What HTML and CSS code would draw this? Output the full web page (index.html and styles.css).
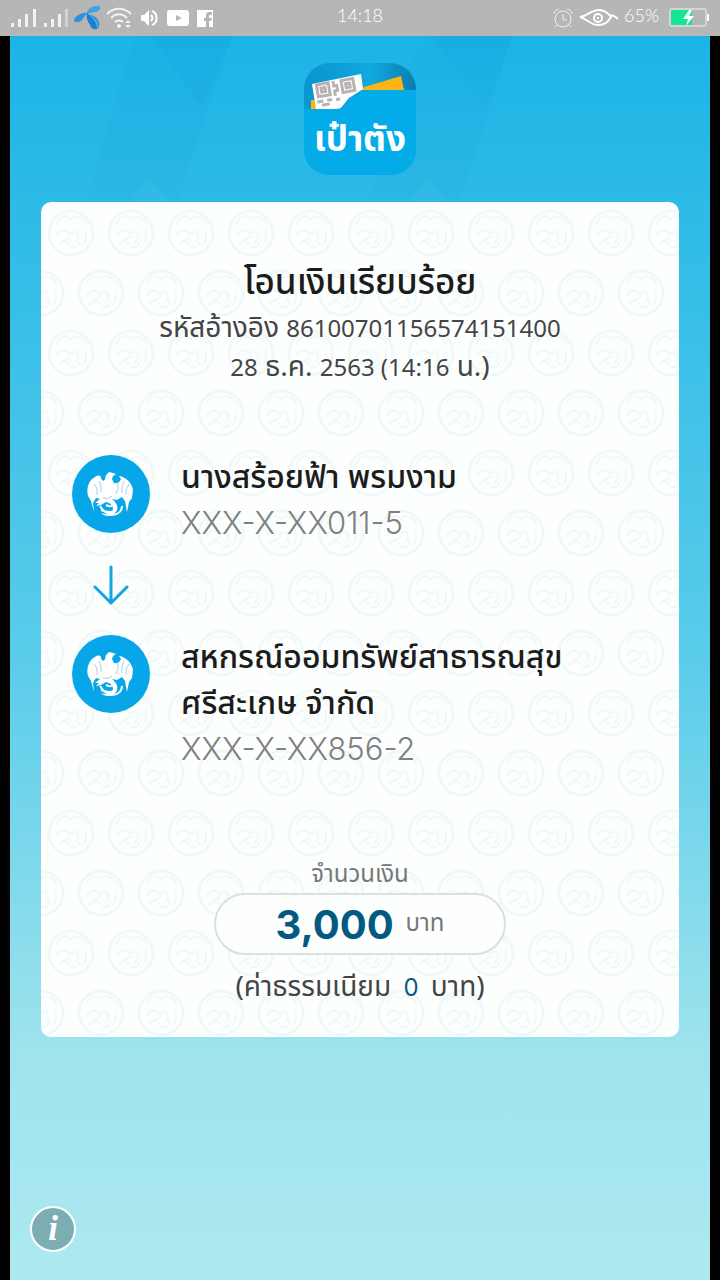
FILE: index.html
```html
<!DOCTYPE html>
<html lang="th">
<head>
    <meta charset="UTF-8">
    <meta name="viewport" content="width=device-width, initial-scale=1.0">
    <title>โอนเงินเรียบร้อย</title>
    <link rel="stylesheet" href="styles.css">
</head>
<body>

    <!-- แถบสถานะ -->
    <header class="status-bar">
        <div class="status-left">
            <div class="icon-group">
                <svg width="26" height="20" viewBox="0 0 26 20" fill="#f2f2f2"><path d="M1 15h3v4H1zM8 11h3v8H8zM15 6h3v13h-3zM23 1h3v18h-3z"/></svg>
                <svg width="26" height="20" viewBox="0 0 26 20" fill="#f2f2f2"><path d="M2 15h3v4H2zM9 11h3v8H9zM16 6h3v13h-3z"/><path fill="#d2d2d2" d="M23 1h3v18h-3z"/></svg>
                <svg width="26" height="26" viewBox="0 0 26 26">
                    <path fill="#3aa5e6" d="M13 9C13 4 19 0 25 1c3 2 0 6-4 6-3 0-6 1-8 2z"/>
                    <path fill="#2f93dc" d="M14 8C8 7 1 11 0 15c0 3 5 3 8 0 2-3 3-5 6-7z"/>
                    <path fill="#1c7fd0" d="M13 9c-1 5 1 8 3 11 1 4 4 5 7 4 4-3 2-9-2-12-3-2-6-2-8-4z"/>
                    <path fill="#4fb1ec" d="M14 9c5 2 9 5 10 10 1 3 0 4-1 5 0-7-4-11-9-15z"/>
                </svg>
                <svg width="26" height="22" viewBox="0 0 26 22" fill="none" stroke="#f2f2f2" stroke-width="2">
                    <path d="M1 7C8 0 18 0 25 7M5 11c5-5 11-5 16 0M9 15c2-2 6-2 8 0"/>
                    <circle cx="13" cy="19" r="2" fill="#f2f2f2" stroke="none"/>
                    <path d="M19 16l3-3 3 3zM19 18l3 3 3-3z" fill="#f2f2f2" stroke="none"/>
                </svg>
            </div>
            <div class="icon-group media">
                <svg width="19" height="18" viewBox="0 0 19 18" fill="none" stroke="#fff" stroke-width="2">
                    <path d="M1 6h3l5-5v16l-5-5H1z" fill="#fff" stroke="none"/>
                    <path d="M11 6q3 3 0 6M12 2c6 2 6 12 0 14"/>
                </svg>
                <svg width="22" height="16" viewBox="0 0 22 16"><rect width="22" height="16" rx="3" fill="#fff"/><path d="M9 5l6 3-6 3z" fill="#b6b6b6"/></svg>
                <svg width="16" height="17" viewBox="0 0 16 17"><path fill="#fff" d="M0 0h16v17h-4v-6h2l1-3h-3V6q0-1 1-1h2V2h-3q-3 0-3 4v2H7v3h2v6H0z"/></svg>
            </div>
        </div>
        <time class="clock">14:18</time>
        <div class="status-right">
            <svg width="20" height="20" viewBox="0 0 20 20" fill="none" stroke="#f2f2f2"><circle cx="10" cy="11" r="8"/><path d="M10 6v6h4M1 6q0-4 5-5M19 6q0-4-5-5M4 17l-2 2M16 17l2 2"/></svg>
            <svg width="41" height="20" viewBox="0 0 41 20" fill="none" stroke="#fff" stroke-width="2"><path d="M2 9C10 8 13 2 21 2c6 0 9 3 12 7-3 5-6 8-13 8C13 17 9 11 2 9zM31 7q5 0 9 4"/><circle cx="20" cy="10" r="4"/><path d="M20 9v2"/></svg>
            <span class="battery-level">65%</span>
            <svg class="battery" width="41" height="20" viewBox="0 0 41 20"><rect x="1" y="1" width="36" height="17" rx="1" fill="none" stroke="#f2f2f2"/><path d="M2 2h21v15H2z" fill="#14e597"/><path d="M38 6h2v7h-2z" fill="#fff"/><path d="M20 2l-6 9h5l-2 7 8-10h-5l3-6z" fill="#fff"/></svg>
        </div>
    </header>

    <main class="screen">
        <svg class="facets" viewBox="0 0 700 168">
            <path fill="#007fbd" fill-opacity=".04" d="M126 0h96l-55 168H75l41-140z"/>
            <path fill="#007fbd" fill-opacity=".05" d="M141 0h81l-30 72zM422 0h80l-25 72z"/>
            <path fill="#007fbd" fill-opacity=".04" d="M422 0h80l-53 168h-92l41-140z"/>
            <path fill="#fff" fill-opacity=".04" d="M139 141l22 27h-42zM417 141l22 27h-42z"/>
        </svg>

        <svg class="app-logo" width="112" height="112" viewBox="0 0 112 112">
            <defs>
                <linearGradient id="logoBack" x1="0" x2="1"><stop offset="0" stop-color="#0995cf"/><stop offset=".6" stop-color="#11a8df"/><stop offset="1" stop-color="#087eaf"/></linearGradient>
            </defs>
            <rect width="112" height="112" rx="26" fill="url(#logoBack)"/>
            <path d="M7 37l5 0v9H7zM57 25l40-12 3 14H57z" fill="#fdb515"/>
            <path d="M8 21l49-10 2 15-14 9-9 11H12z" fill="#fff"/>
            <g transform="rotate(-10 30 30)" fill="none" stroke="#b7b2b4" stroke-width="3">
                <path d="M14 19h12v12H14zM39 19h12v12H39z"/>
                <path d="M18 23h4v4h-4zM43 23h4v4h-4zM31 18v5h3v5h-3v5M12 36h6M22 36h5M31 37h4M16 40h8"/>
            </g>
            <path d="M0 46h32c10 0 12-9 21-14 6-5 11-5 18-5h41v59c0 15-11 26-26 26H26C11 112 0 101 0 86z" fill="#03ace9"/>
            <text class="logo-text" x="56" y="88" text-anchor="middle">เป๋าตัง</text>
        </svg>

        <section class="slip">
            <svg class="watermark" width="100%" height="100%">
                <defs>
                    <g id="seal" fill="none" stroke="#f0f9f8">
                        <circle r="22" stroke-width="3"/>
                        <path stroke-width="2" d="M-15-8Q-12-17-4-17M4-17q9 1 12 9M-4-17l4 3 4-3M-14 3q3-7 9-5t3 7l-6 3M-12 12l5-5 6 4M-1 1q7-5 8 1T3 9M0 14q8 1 9-6M14-3q3 8-2 15"/>
                    </g>
                    <pattern id="seals" width="60" height="120" patternUnits="userSpaceOnUse">
                        <use href="#seal" x="30" y="31"/>
                        <use href="#seal" x="0" y="91"/>
                        <use href="#seal" x="60" y="91"/>
                    </pattern>
                </defs>
                <rect width="100%" height="100%" fill="url(#seals)"/>
            </svg>

            <div class="slip-head">
                <h1>โอนเงินเรียบร้อย</h1>
                <p>รหัสอ้างอิง <span>86100701156574151400</span></p>
                <p><span>28</span> ธ.ค. <span>2563 (14:16</span> น.)</p>
            </div>

            <div class="party">
                <svg class="bank-logo" width="78" height="78" viewBox="0 0 78 78">
                    <circle cx="39" cy="39" r="39" fill="#06a6e8"/>
                    <g id="garuda">
                        <path fill="#fff" d="M34 20l3-3 4 1 3 1-3 2-1 3 2 4c3 1 6-1 7-4l-2-3c7 1 13 7 14 14l-1 8-3 4-2 10-2-11-3-4-5 3-5-1c5 4 7 9 4 13-4 5-11 5-15 1 6 2 11 1 12-4 0-4-3-6-7-7l-5 3-5 1 3-3h-4l5-4-4-1-3 5 1 9-3-11-3-5c-2-8 1-16 7-19 3-2 6-2 6 1 1 3 3 4 4 1z"/>
                        <path fill="none" stroke="#fff" stroke-width="2" d="M28 51c3 5 6 8 12 9 6 0 10-4 10-9M29 55c5 2 9 3 13 1M34 50c4 2 6 2 8-1"/>
                        <path fill="none" stroke="#a9cfe3" d="M22 29q4 4 3 11M27 26q3 5 2 11M57 29q-4 5-3 11M52 26q-3 5-2 12M31 43q5 2 9-2M46 28q1 6-2 11"/>
                    </g>
                </svg>
                <div class="party-info">
                    <h2>นางสร้อยฟ้า พรมงาม</h2>
                    <p>XXX-X-XX011-5</p>
                </div>
            </div>

            <div class="arrow">
                <svg width="38" height="40" viewBox="0 0 38 40" fill="none" stroke="#16a3df" stroke-width="3" stroke-linecap="round" stroke-linejoin="round"><path d="M19 2v36M3 22l16 16 16-16"/></svg>
            </div>

            <div class="party">
                <svg class="bank-logo" width="78" height="78" viewBox="0 0 78 78">
                    <circle cx="39" cy="39" r="39" fill="#06a6e8"/>
                    <use href="#garuda"/>
                </svg>
                <div class="party-info">
                    <h2>สหกรณ์ออมทรัพย์สาธารณสุข<br>ศรีสะเกษ จำกัด</h2>
                    <p>XXX-X-XX856-2</p>
                </div>
            </div>

            <div class="amount">
                <p class="amount-label">จำนวนเงิน</p>
                <p class="amount-box"><strong>3,000</strong> <span>บาท</span></p>
                <p class="fee">(ค่าธรรมเนียม <span>0</span> บาท)</p>
            </div>
        </section>

        <button class="info-button" type="button">i</button>
    </main>

</body>
</html>
```
FILE: styles.css
```css
* {
    box-sizing: border-box;
}

body {
    margin: 0;
    min-height: 100vh;
    display: flex;
    flex-direction: column;
    background: #000;
    font-family: "Noto Sans Thai", Kanit, Prompt, "Noto Sans", sans-serif;
    color: #444;
}

h1, h2, p {
    margin: 0;
}

/* แถบสถานะ */
.status-bar {
    display: grid;
    grid-template-columns: 1fr auto 1fr;
    align-items: center;
    height: 36px;
    padding: 0 10px;
    background: #b6b6b6;
    color: #fff;
    font-family: Lato, sans-serif;
    font-weight: 300;
    font-size: 18px;
}

.status-left, .status-right, .icon-group {
    display: flex;
    align-items: center;
}

.status-left {
    gap: 8px;
}

.icon-group {
    gap: 6px;
}

.icon-group.media {
    gap: 8px;
}

.status-right {
    justify-content: flex-end;
    gap: 5px;
}

.clock, .battery-level {
    padding-bottom: 6px;
}

.battery {
    margin-left: 5px;
}

/* พื้นหลัง */
.screen {
    position: relative;
    flex: 1;
    display: flex;
    flex-direction: column;
    align-items: center;
    margin: 0 10px;
    padding: 27px 31px 28px;
    background: linear-gradient(#1cb4e6, #5accea 50%, #9fe3ed 82%, #ade9f0);
}

.facets {
    position: absolute;
    top: 0;
    left: 0;
    width: 100%;
}

.app-logo {
    position: relative;
    margin-bottom: 27px;
}

.logo-text {
    font-size: 35px;
    font-weight: 700;
    fill: #fff;
}

/* สลิป */
.slip {
    position: relative;
    width: 100%;
    padding: 57px 31px 16px;
    border-radius: 10px;
    background: #fdfffe;
    overflow: hidden;
}

.watermark {
    position: absolute;
    top: 0;
    left: 0;
}

.slip-head, .party, .arrow, .amount {
    position: relative;
}

.slip-head {
    text-align: center;
    font-size: 28px;
    line-height: 39px;
    margin-bottom: 68px;
}

.slip-head h1 {
    font-size: 35px;
    font-weight: 500;
    line-height: 50px;
    color: #1c1c1c;
}

.slip-head span {
    font-size: 24px;
    line-height: 1;
}

.party {
    display: flex;
    gap: 31px;
}

.bank-logo {
    flex: none;
}

.party-info h2 {
    font-size: 32px;
    font-weight: 500;
    line-height: 46px;
    color: #1c1c1c;
}

.party-info p {
    font-family: Inter, sans-serif;
    font-size: 31px;
    font-weight: 300;
    line-height: 44px;
    color: #808080;
}

.arrow {
    padding: 20px 20px 30px;
    line-height: 0;
}

.amount {
    display: flex;
    flex-direction: column;
    align-items: center;
    margin-top: 86px;
}

.amount-label {
    font-size: 24px;
    line-height: 36px;
    color: #777;
}

.amount-box {
    display: flex;
    justify-content: center;
    align-items: center;
    gap: 12px;
    width: 292px;
    height: 62px;
    border: 2px solid #dcdfdf;
    border-radius: 31px;
    background: #fdfffe;
    color: #777;
    font-size: 24px;
}

.amount-box strong {
    font-family: Inter, sans-serif;
    font-size: 40px;
    color: #035a80;
}

.fee {
    font-size: 28px;
    line-height: 66px;
}

.fee span {
    margin: 0 5px;
    font-family: Inter, sans-serif;
    font-size: 24px;
    color: #035a80;
}

.info-button {
    position: absolute;
    left: 20px;
    bottom: 28px;
    width: 46px;
    height: 46px;
    padding: 0;
    border: 2px solid #fff;
    border-radius: 50%;
    background: #7badb3;
    color: #fff;
    font: italic bold 35px "Liberation Serif", serif;
}
```
